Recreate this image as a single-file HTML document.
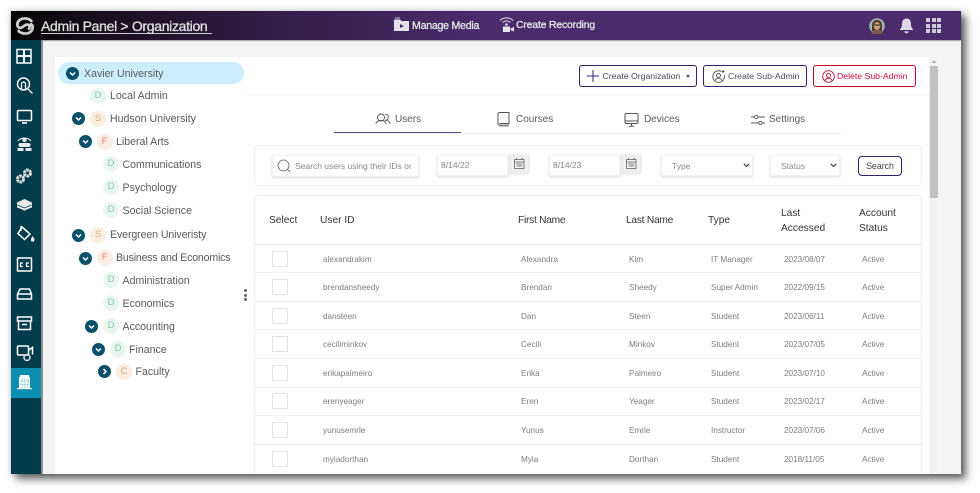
<!DOCTYPE html>
<html><head><meta charset="utf-8">
<style>
html,body{margin:0;padding:0;background:#fff;width:980px;height:493px;overflow:hidden;font-family:"Liberation Sans",sans-serif}
*{box-sizing:border-box}
.a,.t,.b,.c,.h,.r span,svg.a{position:absolute}
#win{position:absolute;left:11px;top:11px;width:950px;height:463px;background:#f3f3f3;box-shadow:5px 5px 8px rgba(0,0,0,.6),0 0 6px rgba(0,0,0,.2)}
#stage{position:absolute;left:0;top:0;width:980px;height:493px;overflow:hidden}
.t{white-space:nowrap;font-size:10.6px;color:#5a5a5a;line-height:14px;height:14px}
.b+.t,.c+.t{margin-top:.5px}
svg+.t{margin-top:1px}
.b{width:16px;height:16px;border-radius:50%;font-size:9.5px;line-height:16px;text-align:center}
.D{background:#e9f6f0;color:#8ccba5}.S{background:#f9eee0;color:#e0b070}.F{background:#fdebe6;color:#e98d78}.C{background:#f9eee0;color:#e0a870}
.c{width:13px;height:13px;border-radius:50%;background:#0a5068}
.c svg{position:absolute;left:0;top:0}
.btn{position:absolute;border-radius:3px;background:#fff;border:1px solid #3c1a78;height:22px;font-size:8.7px;line-height:20px;color:#4a4a5a;white-space:nowrap}
.h{font-size:10.2px;color:#333;line-height:14.5px;white-space:nowrap}
.r{position:absolute;left:254px;width:668px;height:28px;font-size:8.2px;color:#7d7d7d}
.r span{top:7.5px;line-height:14px;white-space:nowrap}
.r i{position:absolute;left:18px;top:5.6px;width:16px;height:16px;border:1px solid #e3e3e8;border-radius:1px;background:#fff}
.s1{left:69px}.s2{left:267px}.s3{left:375px}.s4{left:457px}.s5{left:530px}.s6{left:608px}
.line{position:absolute;left:254px;width:668px;height:1px;background:#f0f0f0}
.inp{position:absolute;background:#fff;border:1px solid #f2f2f2;box-shadow:0 1px 2px rgba(0,0,0,.14);font-size:8.5px;color:#8a8a8a;line-height:20px;white-space:nowrap}
</style></head><body>
<div id="stage">
<div id="win"></div>

<!-- header -->
<div class="a" style="left:11px;top:11px;width:950px;height:29px;background:linear-gradient(90deg,#050505 0%,#1d1022 12%,#351f4c 30%,#4a2c6c 50%,#4a2c6c 100%);box-shadow:0 1px 1px rgba(0,0,0,.35)"></div>
<svg class="a" style="left:15px;top:16px" width="20" height="20" viewBox="0 0 22 22" fill="none" stroke="#cfcfcf" stroke-width="3" stroke-linecap="round"><path d="M18 5.500C15.500 2.500 9 1.500 5 4.500 2 7 1.500 11.500 5 13 8 14 10 9.500 13 9.500 16 9.500 17 12 15.500 14"/><path d="M4 16.500C6.500 19.500 13 20.500 17 17.500 20 15 20.500 10.500 17.500 9"/></svg>
<div class="t" style="left:41px;top:17px;height:17px;line-height:17px;font-size:14px;color:#dcdcdc;-webkit-text-stroke:.35px #dcdcdc;letter-spacing:-.32px">Admin Panel &gt; Organization</div>
<div class="a" style="left:41px;top:33px;width:171px;height:1px;background:#cfcbd6"></div>

<svg class="a" style="left:393px;top:17px" width="17" height="15" viewBox="0 0 17 15"><path d="M1 2.500h6l1.500 1.500H16v10H1z" fill="#e4e0ea"/><path d="M2 1h5" stroke="#c8c0d0" stroke-width="1"/><path d="M7 7l4 2-4 2z" fill="#4a2c6c"/></svg>
<div class="t" style="left:412px;top:18px;font-size:10.6px;color:#e6e6e6;-webkit-text-stroke:.3px #e6e6e6;letter-spacing:-.25px">Manage Media</div>
<svg class="a" style="left:498px;top:16px" width="18" height="17" viewBox="0 0 18 17" fill="none"><path d="M2 4.500C5.500 1 11.500 1 15 4.500M4.500 6.500C7 4.500 10 4.500 12.500 6.500" stroke="#e0dce6" stroke-width="1"/><circle cx="8.500" cy="8.500" r="1.300" fill="#e4e0ea"/><path d="M5 10.500h7v5.500H5z" fill="#e8e4ee"/><path d="M12.500 12.500l3.500-1.500v4.500l-3.500-1.500z" fill="#e8e4ee"/></svg>
<div class="t" style="left:516px;top:18px;font-size:10.400px;color:#e6e6e6;-webkit-text-stroke:.3px #e6e6e6;letter-spacing:-.15px">Create Recording</div>

<svg class="a" style="left:869px;top:18px" width="16" height="16" viewBox="0 0 16 16"><circle cx="8" cy="8" r="7.800" fill="#9fb3ad"/><path d="M3 8c0-4 2-6 5-6s5 2 5 6v5H3z" fill="#4c3a30"/><ellipse cx="8" cy="8" rx="3.300" ry="4" fill="#c99a7c"/><path d="M4.800 7h6.400" stroke="#222" stroke-width="1"/><path d="M2.500 15c1-2.500 3-3 5.500-3s4.500.5 5.500 3a8 8 0 0 1-11 0z" fill="#7d5a4a"/></svg>
<svg class="a" style="left:899px;top:18px" width="15" height="16" viewBox="0 0 15 16"><path d="M7.500 0.500c3.200 0 4.500 2.500 4.500 5.500 0 3 1 4.500 2.500 6H.5C2 10.500 3 9 3 6 3 3 4.300.5 7.500.5z" fill="#ddd8e4"/><path d="M5.500 13.300h4a2 2 0 0 1-4 0z" fill="#ddd8e4"/></svg>
<div class="a" style="left:926px;top:18px;width:15px;height:15px;display:grid;grid-template-columns:repeat(3,4px);gap:1.500px">
<b style="background:#cfcad8"></b><b style="background:#cfcad8"></b><b style="background:#cfcad8"></b><b style="background:#cfcad8"></b><b style="background:#cfcad8"></b><b style="background:#cfcad8"></b><b style="background:#cfcad8"></b><b style="background:#cfcad8"></b><b style="background:#cfcad8"></b></div>

<!-- sidebar -->
<div class="a" style="left:11px;top:40px;width:30px;height:434px;background:#003c4b"></div>
<div class="a" style="left:41px;top:40px;width:2px;height:434px;background:#8a8f92"></div>
<div class="a" style="left:11px;top:368px;width:30px;height:30px;background:#0a8fb0"></div>
<svg class="a" style="left:11px;top:40px" width="30" height="360" viewBox="0 0 30 360" fill="none" stroke="#fff" stroke-width="1.400">
<!-- grid -->
<rect x="6" y="9.500" width="14" height="13.500" stroke-width="1.500"/><path d="M13 9.500v13.500M6 16h14" stroke-width="2"/>
<!-- search -->
<circle cx="12.500" cy="44" r="6"/><path d="M10.500 49v-5a2 2 0 0 1 4 0v5M17 49l4.500 4.500" stroke-width="1.300"/>
<!-- monitor -->
<rect x="6.500" y="70.500" width="14" height="10" rx="1" stroke-width="1.500"/><path d="M11 83h5" stroke-width="1.600"/>
<!-- people -->
<g fill="#e8e8e8" stroke="none"><circle cx="13.500" cy="100" r="2.200"/><path d="M10 103h7v4h-7z"/><circle cx="9.500" cy="105" r="2"/><circle cx="17.500" cy="105" r="2"/><path d="M6.500 108h6v3h-6zM14.500 108h6v3h-6z"/></g>
<path d="M7 101c3-4 10-4 13 0" stroke-width="1"/>
<!-- gears -->
<g stroke="#e0e0e0" stroke-width="3"><circle cx="16.500" cy="133" r="3" stroke-dasharray="2.500 .6"/><circle cx="9.500" cy="139" r="3" stroke-dasharray="2.500 .6"/></g>
<!-- layers -->
<path d="M13.500 159l7.500 3.500v5l-7.500 4-7.500-4v-5z" fill="#e8e8e8" stroke="none"/><path d="M6.500 165l7 3 7-3M6.500 168l7 3 7-3" stroke="#003c4b" stroke-width=".8"/>
<!-- paint -->
<path d="M11 187l8 7-5.500 5.500-6.500-6z" stroke-width="1.500"/><path d="M10 186v5" /><path d="M21.500 196c1.500 2 2 3 2 3.800a1.800 1.800 0 0 1-3.600 0c0-.8.600-1.800 1.600-3.800z" fill="#fff" stroke="none"/>
<!-- cc -->
<rect x="6.500" y="218" width="14" height="13" rx=".5" stroke-width="1.500"/><path d="M12 223h-2.500v3.500H12M18 223h-2.500v3.500H18" stroke-width="1.200"/>
<!-- inbox -->
<path d="M9 249h9.500l2 5v5h-14v-5z" stroke-width="1.500"/><path d="M6.500 254h14" stroke-width="1.500"/>
<!-- archive -->
<rect x="6.500" y="277" width="14" height="4" stroke-width="1.500"/><path d="M7.500 281v8.500h12V281M11 284.500h5" stroke-width="1.500"/>
<!-- video cog -->
<rect x="6.500" y="306" width="11" height="9" rx="1" stroke-width="1.500"/><path d="M18 310l3.500-2.500v7" stroke-width="1.500"/><circle cx="16" cy="317.500" r="3" stroke-width="1.500" stroke="#ddd"/>
<!-- building -->
<g fill="#fff" stroke="none"><path d="M9 335h9v2H9zM8 337h11v11H8z"/><path d="M6 348h15v1.200H6z"/></g>
<path d="M8.500 341h10M8.500 344.500h10M11 338v10M14 338v10M17 338v10" stroke="#6fc0d6" stroke-width=".6"/>
</svg>

<!-- panel -->
<div class="a" style="left:55px;top:57px;width:874px;height:417px;background:#fff"></div>
<div class="a" style="left:245px;top:94px;width:684px;height:2px;background:#f7f7f7"></div>

<!-- scrollbar -->
<div class="a" style="left:929px;top:57px;width:9px;height:417px;background:#f1f1f1"></div>
<div class="a" style="left:930px;top:66px;width:8px;height:132px;background:#c1c1c1"></div>
<div class="a" style="left:931.500px;top:60px;width:0;height:0;border:2.500px solid transparent;border-bottom:3px solid #a8a8a8;border-top:0"></div>

<!-- tree -->
<div class="a" style="left:58px;top:62px;width:186px;height:22px;border-radius:11px;background:#cdeeff"></div>
<div class="c" style="left:65.500px;top:66.500px"><svg width="13" height="13" fill="none" stroke="#fff" stroke-width="1.500"><path d="M4 5.500l2.500 2.500L9 5.500"/></svg></div>
<div class="t" style="left:84px;top:66px">Xavier University</div>

<div class="b D" style="left:90px;top:87.500px">D</div><div class="t" style="left:110px;top:88px">Local Admin</div>

<div class="c" style="left:72px;top:112px"><svg width="13" height="13" fill="none" stroke="#fff" stroke-width="1.500"><path d="M4 5.500l2.500 2.500L9 5.500"/></svg></div>
<div class="b S" style="left:90px;top:110.500px">S</div><div class="t" style="left:110px;top:111px">Hudson University</div>

<div class="c" style="left:78.500px;top:135px"><svg width="13" height="13" fill="none" stroke="#fff" stroke-width="1.500"><path d="M4 5.500l2.500 2.500L9 5.500"/></svg></div>
<div class="b F" style="left:96.500px;top:133.500px">F</div><div class="t" style="left:116px;top:134px">Liberal Arts</div>

<div class="b D" style="left:103px;top:156px">D</div><div class="t" style="left:122.500px;top:157px">Communications</div>
<div class="b D" style="left:103px;top:179px">D</div><div class="t" style="left:122.500px;top:180px">Psychology</div>
<div class="b D" style="left:103px;top:202px">D</div><div class="t" style="left:122.500px;top:203px">Social Science</div>

<div class="c" style="left:72px;top:228.500px"><svg width="13" height="13" fill="none" stroke="#fff" stroke-width="1.500"><path d="M4 5.500l2.500 2.500L9 5.500"/></svg></div>
<div class="b S" style="left:90px;top:227px">S</div><div class="t" style="left:110px;top:227.500px;letter-spacing:-.1px">Evergreen Univeristy</div>

<div class="c" style="left:78.500px;top:251.500px"><svg width="13" height="13" fill="none" stroke="#fff" stroke-width="1.500"><path d="M4 5.500l2.500 2.500L9 5.500"/></svg></div>
<div class="b F" style="left:96.500px;top:250px">F</div><div class="t" style="left:116px;top:250.500px;letter-spacing:-.18px">Business and Economics</div>

<div class="b D" style="left:103px;top:272px">D</div><div class="t" style="left:122.500px;top:273px">Administration</div>
<div class="b D" style="left:103px;top:295px">D</div><div class="t" style="left:122.500px;top:296px">Economics</div>

<div class="c" style="left:85px;top:320px"><svg width="13" height="13" fill="none" stroke="#fff" stroke-width="1.500"><path d="M4 5.500l2.500 2.500L9 5.500"/></svg></div>
<div class="b D" style="left:103px;top:318px">D</div><div class="t" style="left:122.500px;top:319px">Accounting</div>

<div class="c" style="left:91.500px;top:343px"><svg width="13" height="13" fill="none" stroke="#fff" stroke-width="1.500"><path d="M4 5.500l2.500 2.500L9 5.500"/></svg></div>
<div class="b D" style="left:110px;top:341px">D</div><div class="t" style="left:129px;top:342px">Finance</div>

<div class="c" style="left:98px;top:365px"><svg width="13" height="13" fill="none" stroke="#fff" stroke-width="1.500"><path d="M5.500 4l2.500 2.500L5.500 9"/></svg></div>
<div class="b C" style="left:116px;top:364px">C</div><div class="t" style="left:135.500px;top:364px">Faculty</div>

<div class="a" style="left:244px;top:289px;width:3px;height:3px;border-radius:50%;background:#666"></div>
<div class="a" style="left:244px;top:293.500px;width:3px;height:3px;border-radius:50%;background:#666"></div>
<div class="a" style="left:244px;top:298px;width:3px;height:3px;border-radius:50%;background:#666"></div>

<!-- buttons -->
<div class="btn" style="left:579px;top:65px;width:118px"><span class="a" style="left:22.500px;top:0">Create Organization</span><span class="a" style="left:106px;top:9px;width:0;height:0;border:2.500px solid transparent;border-top:3px solid #3c4a6a;border-bottom:0"></span></div>
<svg class="a" style="left:587px;top:70px" width="12" height="12" stroke="#3c1a78" stroke-width="1"><path d="M6 0v12M0 6h12"/></svg>
<div class="btn" style="left:703px;top:65px;width:104px"><span class="a" style="left:24px;top:0">Create Sub-Admin</span></div>
<svg class="a" style="left:712px;top:70px" width="13" height="13" fill="none" stroke="#555" stroke-width=".9"><path d="M9 1.300A5.800 5.800 0 1 0 12.200 5"/><circle cx="6.500" cy="5.500" r="2"/><path d="M2.800 11c.6-2 2-2.800 3.700-2.800s3 .8 3.700 2.800M11 0v3M9.500 1.500h3"/></svg>
<div class="btn" style="left:813px;top:65px;width:103px;border-color:#c8002c"><span class="a" style="left:23px;top:0;color:#c8103c">Delete Sub-Admin</span></div>
<svg class="a" style="left:822px;top:70px" width="13" height="13" fill="none" stroke="#c8103c" stroke-width=".9"><circle cx="6.500" cy="6.500" r="5.800"/><circle cx="6.500" cy="5.500" r="2"/><path d="M2.800 11c.6-2 2-2.800 3.700-2.800s3 .8 3.700 2.800"/></svg>

<!-- tabs -->
<div class="a" style="left:334px;top:133px;width:507px;height:1px;background:#eee"></div>
<div class="a" style="left:334px;top:132px;width:127px;height:1.300px;background:#5b4a8a"></div>
<svg class="a" style="left:375px;top:113px" width="16" height="12" fill="none" stroke="#555" stroke-width=".9"><circle cx="6" cy="4.500" r="3.500"/><path d="M.8 11c.5-2.500 2.500-3.500 5.200-3.500s4.700 1 5.200 3.500M10 1.300c2-.5 3.500 1 3.300 3-.1 1.500-1 2.500-2.300 3 2 .3 3.800 1.500 4.300 3.700"/></svg>
<div class="t" style="left:395px;top:112px;font-size:10px">Users</div>
<svg class="a" style="left:497px;top:112px" width="13" height="15" fill="none" stroke="#555" stroke-width="1"><path d="M1 13V2a1.500 1.500 0 0 1 1.500-1.500h9.500v11H2.500"/><path d="M1 12.500h11v2H2z" fill="#888" stroke="none"/></svg>
<div class="t" style="left:516px;top:112px;font-size:10px">Courses</div>
<svg class="a" style="left:624px;top:113px" width="15" height="14" fill="none" stroke="#555" stroke-width="1"><rect x="1" y=".5" width="13" height="10" rx="1"/><path d="M1 8h13M7.500 10.500V13M5 13.300h5"/></svg>
<div class="t" style="left:644px;top:112px;font-size:10px">Devices</div>
<svg class="a" style="left:751px;top:114px" width="14" height="12" fill="none" stroke="#555" stroke-width=".9"><path d="M0 3h3.500M7 3h7M0 9h8M11 9h3"/><circle cx="5.200" cy="3" r="1.700"/><circle cx="9.500" cy="9" r="1.700"/></svg>
<div class="t" style="left:769px;top:112px;font-size:10px">Settings</div>

<!-- filter panel -->
<div class="a" style="left:254px;top:145px;width:668px;height:41px;border:1px solid #eee;border-radius:4px;background:#fff"></div>
<div class="inp" style="left:272px;top:155px;width:147px;height:22px"><span class="a" style="left:22px;top:0">Search users using their IDs or</span></div>
<svg class="a" style="left:277px;top:159px" width="14" height="14" fill="none" stroke="#666" stroke-width=".8"><circle cx="6.500" cy="6.500" r="5.500"/><path d="M10.500 10.500l2.500 2.500"/></svg>
<div class="inp" style="left:437px;top:155px;width:71px;height:21px"><span class="a" style="left:3px;top:-1px">8/14/22</span></div>
<div class="a" style="left:508px;top:154px;width:22px;height:21px;background:#eee;border-radius:3px"></div>
<svg class="a" style="left:514px;top:158px" width="11" height="11" fill="none" stroke="#666" stroke-width=".8"><rect x=".5" y="1.500" width="9.500" height="9"/><path d="M.5 4h9.500M2.500 0v2M8 0v2M2.500 6h6M2.500 8h6" /></svg>
<div class="inp" style="left:549px;top:155px;width:71px;height:21px"><span class="a" style="left:3px;top:-1px">8/14/23</span></div>
<div class="a" style="left:620px;top:154px;width:22px;height:21px;background:#eee;border-radius:3px"></div>
<svg class="a" style="left:626px;top:158px" width="11" height="11" fill="none" stroke="#666" stroke-width=".8"><rect x=".5" y="1.500" width="9.500" height="9"/><path d="M.5 4h9.500M2.500 0v2M8 0v2M2.500 6h6M2.500 8h6" /></svg>
<div class="inp" style="left:661px;top:155px;width:92px;height:21px"><span class="a" style="left:10px;top:0">Type</span></div>
<svg class="a" style="left:743px;top:163px" width="7" height="5" fill="none" stroke="#444" stroke-width="1.200"><path d="M.8.800l2.700 2.700L6.200.8"/></svg>
<div class="inp" style="left:770px;top:155px;width:70px;height:21px"><span class="a" style="left:10px;top:0">Status</span></div>
<svg class="a" style="left:830px;top:163px" width="7" height="5" fill="none" stroke="#444" stroke-width="1.200"><path d="M.8.800l2.700 2.700L6.200.8"/></svg>
<div class="btn" style="left:858px;top:156px;width:44px;height:20px;line-height:18px;text-align:center;border-radius:4px;color:#444;font-size:8.800px">Search</div>

<!-- table -->
<div class="a" style="left:254px;top:195px;width:668px;height:279px;border:1px solid #eee;border-bottom:0;border-radius:4px 4px 0 0;background:#fff"></div>
<div class="a" style="left:254px;top:244px;width:668px;height:1px;background:#e6e6e6"></div>
<div class="line" style="top:272px"></div><div class="line" style="top:301px"></div><div class="line" style="top:329px"></div><div class="line" style="top:358px"></div><div class="line" style="top:387px"></div><div class="line" style="top:415px"></div><div class="line" style="top:444px;background:#eaeaea"></div>

<div class="h" style="left:269px;top:213.500px">Select</div>
<div class="h" style="left:320px;top:213.500px">User ID</div>
<div class="h" style="left:518px;top:213.500px;letter-spacing:-.25px">First Name</div>
<div class="h" style="left:626px;top:213.500px;letter-spacing:-.25px">Last Name</div>
<div class="h" style="left:708px;top:213.500px">Type</div>
<div class="h" style="left:781px;top:207px">Last<br>Accessed</div>
<div class="h" style="left:859px;top:207px">Account<br>Status</div>

<div class="r" style="top:245px"><i></i><span class="s1">alexandrakim</span><span class="s2">Alexandra</span><span class="s3">Kim</span><span class="s4">IT Manager</span><span class="s5">2023/08/07</span><span class="s6">Active</span></div>
<div class="r" style="top:273px"><i></i><span class="s1">brendansheedy</span><span class="s2">Brendan</span><span class="s3">Sheedy</span><span class="s4">Super Admin</span><span class="s5">2022/09/15</span><span class="s6">Active</span></div>
<div class="r" style="top:302px"><i></i><span class="s1">dansteen</span><span class="s2">Dan</span><span class="s3">Steen</span><span class="s4">Student</span><span class="s5">2023/06/11</span><span class="s6">Active</span></div>
<div class="r" style="top:330px"><i></i><span class="s1">ceciliminkov</span><span class="s2">Cecili</span><span class="s3">Minkov</span><span class="s4">Student</span><span class="s5">2023/07/05</span><span class="s6">Active</span></div>
<div class="r" style="top:359px"><i></i><span class="s1">erikapalmeiro</span><span class="s2">Erika</span><span class="s3">Palmeiro</span><span class="s4">Student</span><span class="s5">2023/07/10</span><span class="s6">Active</span></div>
<div class="r" style="top:387px"><i></i><span class="s1">erenyeager</span><span class="s2">Eren</span><span class="s3">Yeager</span><span class="s4">Student</span><span class="s5">2023/02/17</span><span class="s6">Active</span></div>
<div class="r" style="top:416px"><i></i><span class="s1">yunusemrle</span><span class="s2">Yunus</span><span class="s3">Emrle</span><span class="s4">Instructor</span><span class="s5">2023/07/06</span><span class="s6">Active</span></div>
<div class="r" style="top:445px"><i></i><span class="s1">myiadorthan</span><span class="s2">Myia</span><span class="s3">Dorthan</span><span class="s4">Student</span><span class="s5">2018/11/05</span><span class="s6">Active</span></div>
</div>
</body></html>
